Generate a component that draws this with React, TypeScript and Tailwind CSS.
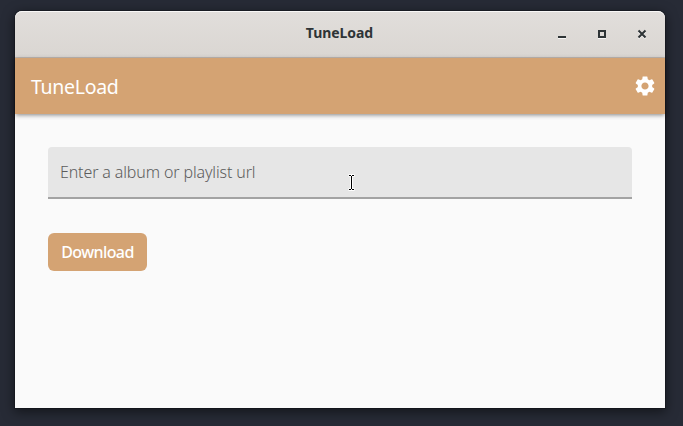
import { MdSettings } from "react-icons/md";

function TitleBar() {
  return (
    <header className="relative flex h-[47px] shrink-0 items-center justify-end rounded-t-[7px] border-t border-b border-t-[#f9f8f7] border-b-[#bfb8b1] bg-linear-to-b from-[#e1dedb] to-[#dad6d2] pr-[17px]">
      <h1 className="absolute inset-x-0 top-[11px] text-center text-[14px] leading-[20px] font-bold tracking-[-0.05px] text-[#2e3436]">
        <span className="relative left-[-0.5px]">TuneLoad</span>
      </h1>
      <div className="flex gap-[28px] text-[#2e3436]">
        <svg className="size-3" viewBox="0 0 12 12" shapeRendering="crispEdges">
          <path d="M2 9h8v1H2z" fill="#f7f6f5" />
          <path d="M2 7h8v2H2z" fill="currentColor" />
        </svg>
        <svg className="size-3" viewBox="0 0 12 12" shapeRendering="crispEdges">
          <path d="M2 9h8v1H2z" fill="#f7f6f5" />
          <path d="M2 1h8v8H2zM4 3v4h4V3z" fillRule="evenodd" fill="currentColor" />
        </svg>
        <svg className="size-3" viewBox="0 0 12 12">
          <path d="m2.5 2.5 7 7m0-7-7 7" stroke="#f7f6f5" strokeWidth="2" />
          <path d="m2.5 1.5 7 7m0-7-7 7" stroke="currentColor" strokeWidth="2" />
        </svg>
      </div>
    </header>
  );
}

function TextCursor() {
  return (
    <svg className="absolute top-[26px] left-[299px] h-[18px] w-[9px]" viewBox="0 0 9 18">
      <path d="M1.5 2.5h2l1 1 1-1h2m-6 14h2l1-1 1 1h2m-3-13v12" fill="none" stroke="white" strokeWidth="3" />
      <path d="M2 2.5h2m1 0h2M2 16.5h2m1 0h2M4.5 3v13" fill="none" stroke="black" />
    </svg>
  );
}

export default function App() {
  return (
    <div className="h-[426px] w-[683px] overflow-hidden bg-[#272b36] pt-[11px] pl-[15px] font-['Noto_Sans',sans-serif] antialiased">
      <div className="flex h-[397px] w-[650px] flex-col rounded-t-[7px] bg-[#fafafa] shadow-[0_3px_12px_1px_rgba(0,0,0,0.5),0_0_0_1px_rgba(0,0,0,0.2)]">
        <TitleBar />
        <div className="z-10 flex h-14 shrink-0 items-center justify-between bg-[#d4a373] pr-[8px] pl-4 text-white shadow-[0_2px_4px_-1px_rgba(0,0,0,0.3),0_1px_5px_rgba(0,0,0,0.2)]">
          <h2 className="pt-[1px] text-[19.5px] leading-6 font-normal tracking-[-0.3px]">TuneLoad</h2>
          <button aria-label="Settings">
            <MdSettings className="size-6" />
          </button>
        </div>
        <main className="flex flex-col items-start px-[33px] pt-[33px]">
          <div className="relative h-[52px] w-full rounded-t-[4px] border-b-2 border-[#a3a3a3] bg-[#e6e6e6]">
            <input
              aria-label="Album or playlist url"
              placeholder="Enter a album or playlist url"
              className="h-full w-full bg-transparent px-3 text-[16px] font-light tracking-[-0.13px] outline-none placeholder:text-[#5c5c5c]"
            />
            <TextCursor />
          </div>
          <button className="mt-[34px] h-[38px] w-[99px] rounded-[6px] bg-[#d4a373] text-[16px] font-medium tracking-[-0.6px] text-white">
            Download
          </button>
        </main>
      </div>
    </div>
  );
}
